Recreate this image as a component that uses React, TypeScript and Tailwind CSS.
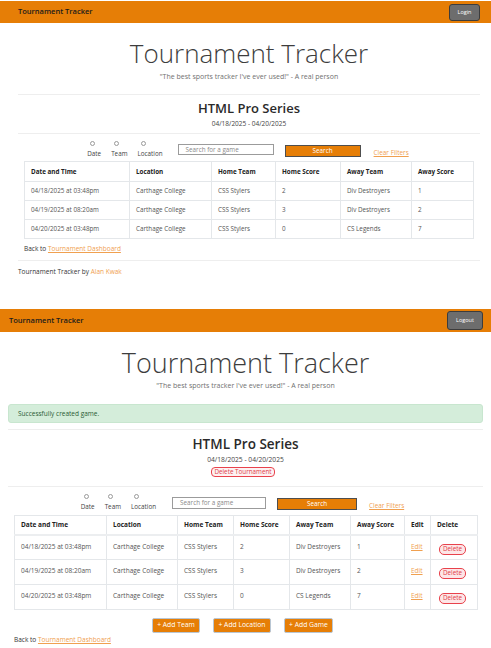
import React from 'react'

const games = [
  { id: 1, date: '04/18/2025 at 03:48pm', location: 'Carthage College', home: 'CSS Stylers', homeScore: 2, away: 'Div Destroyers', awayScore: 1 },
  { id: 2, date: '04/19/2025 at 08:20am', location: 'Carthage College', home: 'CSS Stylers', homeScore: 3, away: 'Div Destroyers', awayScore: 2 },
  { id: 3, date: '04/20/2025 at 03:48pm', location: 'Carthage College', home: 'CSS Stylers', homeScore: 0, away: 'CS Legends', awayScore: 7 }
]

function Navbar({ label, admin }: { label: string; admin?: boolean }) {
  return (
    <div
      className={`flex items-center justify-between bg-[#e67e06] ${
        admin ? 'h-[23px] pl-[9px] pr-[8px]' : 'h-[22px] pl-[18px] pr-[11px]'
      }`}
    >
      <span className="text-[7.5px] font-semibold text-[#1c1c1c]">Tournament Tracker</span>
      <button
        className={`rounded-[3px] border border-[#3c3c3c] bg-[#6d6d6d] text-[5.5px] text-white ${
          admin ? 'h-[19px] w-[36px]' : 'h-[17px] w-[31px]'
        }`}
      >
        {label}
      </button>
    </div>
  )
}

function Radio({ label }: { label: string }) {
  return (
    <div className="flex flex-col items-start">
      <span className="ml-[3px] h-[5px] w-[5px] rounded-full border border-[#9a9a9a] bg-white"></span>
      <span className="mt-[3px] text-[6.3px] leading-[9px] text-[#444]">{label}</span>
    </div>
  )
}

function Filters({ admin }: { admin?: boolean }) {
  return (
    <div className="flex items-start justify-center">
      <div className="flex gap-[10px]">
        <Radio label="Date" />
        <Radio label="Team" />
        <Radio label="Location" />
      </div>
      <div
        className={`flex items-center border border-[#9b9b9b] bg-white pl-[7px] text-[6.3px] text-[#8a8a8a] ${
          admin ? 'ml-[16px] mt-[3px] h-[12px] w-[94px]' : 'ml-[15px] mt-[3px] h-[11px] w-[96px]'
        }`}
      >
        Search for a game
      </div>
      <button
        className={`border border-[#4e4e4e] bg-[#e67e06] text-[6.3px] text-white ${
          admin ? 'ml-[11px] mt-[4px] h-[12px] w-[80px]' : 'ml-[11px] mt-[4px] h-[12px] w-[76px]'
        }`}
      >
        Search
      </button>
      <a className={`mt-[7px] text-[6.4px] leading-[9px] text-[#f0a050] underline ${admin ? 'ml-[12px]' : 'ml-[13px]'}`}>
        Clear Filters
      </a>
    </div>
  )
}

function Title({ admin }: { admin?: boolean }) {
  return (
    <>
      <h1
        className={`text-center font-light text-[#3d3d3d] ${
          admin ? 'mt-[15px] text-[27px] leading-[31px]' : 'mt-[15px] text-[26px] leading-[30px]'
        }`}
      >
        Tournament Tracker
      </h1>
      <p className={`text-center text-[7px] leading-[10px] text-[#707070] ${admin ? 'mt-[3px]' : 'mt-[4px]'}`}>
        "The best sports tracker I've ever used!" - A real person
      </p>
    </>
  )
}

const th = 'border border-[#e4e7ea] px-[6px] text-left font-bold text-[#222]'
const td = 'border border-[#e4e7ea] px-[6px] text-[#555]'

function PublicTable() {
  const widths = ['w-[105px]', 'w-[82px]', 'w-[64px]', 'w-[65px]', 'w-[71px]', 'w-[62px]']
  return (
    <table className="ml-[6px] w-[449px] table-fixed border-collapse text-[6.3px]">
      <colgroup>
        {widths.map((w, i) => (
          <col key={i} className={w} />
        ))}
      </colgroup>
      <thead>
        <tr className="h-[20px]">
          <th className={th}>Date and Time</th>
          <th className={th}>Location</th>
          <th className={th}>Home Team</th>
          <th className={th}>Home Score</th>
          <th className={th}>Away Team</th>
          <th className={th}>Away Score</th>
        </tr>
      </thead>
      <tbody>
        {games.map((g) => (
          <tr key={g.id} className="h-[19px]">
            <td className={td}>{g.date}</td>
            <td className={td}>{g.location}</td>
            <td className={td}>{g.home}</td>
            <td className={td}>{g.homeScore}</td>
            <td className={td}>{g.away}</td>
            <td className={td}>{g.awayScore}</td>
          </tr>
        ))}
      </tbody>
    </table>
  )
}

function AdminTable() {
  const widths = ['w-[92px]', 'w-[71px]', 'w-[56px]', 'w-[56px]', 'w-[61px]', 'w-[54px]', 'w-[26px]', 'w-[47px]']
  const cell = `${td} h-[25px] pt-[6px] align-top leading-[9px]`
  return (
    <table className="ml-[6px] w-[463px] table-fixed border-collapse text-[6.5px]">
      <colgroup>
        {widths.map((w, i) => (
          <col key={i} className={w} />
        ))}
      </colgroup>
      <thead>
        <tr className="h-[19px] border-b-2 border-[#eceef0]">
          <th className={th}>Date and Time</th>
          <th className={th}>Location</th>
          <th className={th}>Home Team</th>
          <th className={th}>Home Score</th>
          <th className={th}>Away Team</th>
          <th className={th}>Away Score</th>
          <th className={th}>Edit</th>
          <th className={th}>Delete</th>
        </tr>
      </thead>
      <tbody>
        {games.map((g) => (
          <tr key={g.id}>
            <td className={cell}>{g.date}</td>
            <td className={cell}>{g.location}</td>
            <td className={cell}>{g.home}</td>
            <td className={cell}>{g.homeScore}</td>
            <td className={cell}>{g.away}</td>
            <td className={cell}>{g.awayScore}</td>
            <td className={cell}>
              <a className="text-[#f0a050] underline">Edit</a>
            </td>
            <td className={`${cell} pl-[8px]`}>
              <button className="mt-[2px] h-[11px] w-[27px] rounded-[5px] border border-[#e8424c] bg-[#fde6e7] text-[6.3px] leading-none text-[#e0404a]">
                Delete
              </button>
            </td>
          </tr>
        ))}
      </tbody>
    </table>
  )
}

function BackLink({ className }: { className: string }) {
  return (
    <p className={`text-[6.5px] leading-[10px] text-[#333] ${className}`}>
      Back to <a className="text-[#f0a050] underline">Tournament Dashboard</a>
    </p>
  )
}

export default function App() {
  return (
    <div className="h-[648px] w-[491px] overflow-hidden bg-white font-['Open_Sans',sans-serif]">
      {/* public view */}
      <div className="h-[308px]">
        <div className="h-[1px]"></div>
        <Navbar label="Login" />
        <div className="ml-[18px] mr-[11px]">
          <Title />
          <hr className="mt-[12px] border-[#eeeeee]" />
          <h2 className="mt-[5px] text-center text-[13px] font-semibold leading-[16px] text-[#2a2a2a]">HTML Pro Series</h2>
          <p className="mt-[3px] text-center text-[6.5px] leading-[9px] text-[#444]">04/18/2025 - 04/20/2025</p>
          <hr className="mt-[5px] border-[#eeeeee]" />
          <div className="mt-[7px] h-[17px] pr-[2px]">
            <Filters />
          </div>
          <div className="mt-[3px]">
            <PublicTable />
          </div>
          <BackLink className="ml-[6px] mt-[5px]" />
          <hr className="mt-[6px] border-[#eeeeee]" />
          <p className="mt-[6px] text-[6.5px] leading-[10px] text-[#333]">
            Tournament Tracker by <span className="text-[#f0a050]">Alan Kwak</span>
          </p>
        </div>
      </div>

      {/* admin view */}
      <div>
        <div className="h-[1px]"></div>
        <Navbar label="Logout" admin />
        <div className="mx-[8px]">
          <Title admin />
          <div className="mt-[13px] flex h-[19px] items-center rounded-[3px] border border-[#c8e6cf] bg-[#d4edda] pl-[9px] text-[6.5px] text-[#2a5b33]">
            Successfully created game.
          </div>
          <hr className="mt-[6px] border-[#eeeeee]" />
          <h2 className="mt-[6px] text-center text-[13.5px] font-semibold leading-[16px] text-[#2a2a2a]">HTML Pro Series</h2>
          <p className="mt-[3px] text-center text-[6.7px] leading-[9px] text-[#444]">04/18/2025 - 04/20/2025</p>
          <div className="mt-[3px] flex justify-center pr-[5px]">
            <button className="h-[10px] w-[64px] rounded-[4px] border border-[#e8424c] bg-[#fdf2f2] text-[6.3px] leading-none text-[#e0404a]">
              Delete Tournament
            </button>
          </div>
          <hr className="mt-[9px] border-[#eeeeee]" />
          <div className="mt-[7px] h-[18px] pr-[6px]">
            <Filters admin />
          </div>
          <div className="mt-[3px]">
            <AdminTable />
          </div>
          <div className="mt-[8px] flex justify-center gap-[13px] pr-[6px]">
            <button className="h-[15px] w-[48px] rounded-[2px] border border-[#b9c6d3] bg-[#e67e06] text-[6.8px] text-white">+ Add Team</button>
            <button className="h-[15px] w-[58px] rounded-[2px] border border-[#b9c6d3] bg-[#e67e06] text-[6.8px] text-white">+ Add Location</button>
            <button className="h-[15px] w-[49px] rounded-[2px] border border-[#b9c6d3] bg-[#e67e06] text-[6.8px] text-white">+ Add Game</button>
          </div>
          <BackLink className="ml-[6px] mt-[2px]" />
        </div>
      </div>
    </div>
  )
}
